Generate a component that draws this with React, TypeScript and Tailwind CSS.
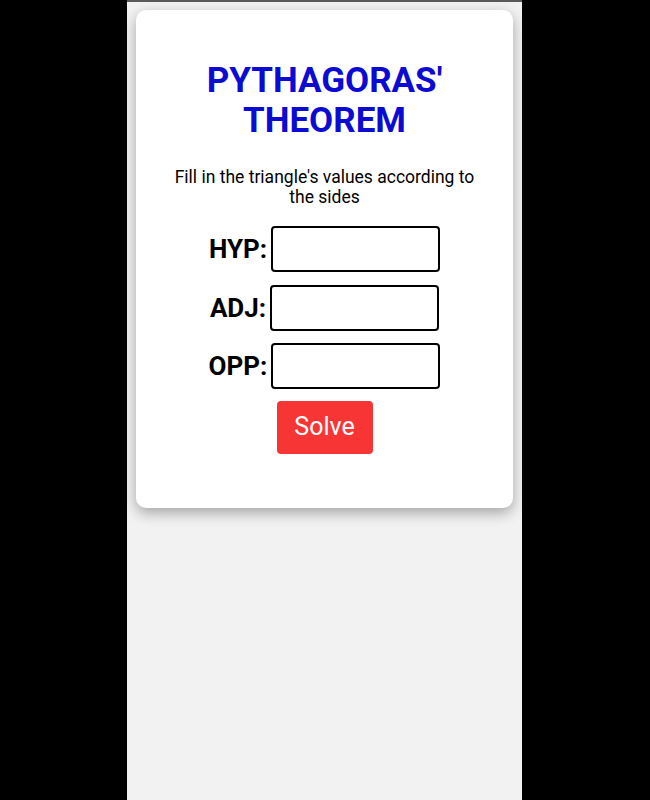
import React from "react";

export default function App() {
  const rows = ["HYP:", "ADJ:", "OPP:"];
  return (
    <div className="w-full h-[800px] bg-black flex justify-center pr-px" style={{ fontFamily: "Roboto, 'Noto Sans', sans-serif" }}>
      <div className="w-[395px] h-full bg-[#f2f2f2] flex flex-col">
        <div className="h-[2px] bg-[#5a5a5a]" />
        <div className="px-[9px] pt-[8px]">
          <div className="bg-white rounded-[10px] shadow-[0_5px_14px_rgba(0,0,0,0.32)] pt-[51px] pb-[54px] flex flex-col items-center">
            <h1 className="text-[35px] leading-[40px] font-bold text-[#0b0bd4] text-center">
              PYTHAGORAS'
              <br />
              THEOREM
            </h1>
            <p className="mt-[26px] text-[17.5px] leading-[20px] text-black text-center px-[30px]">
              Fill in the triangle's values according to the sides
            </p>
            <div className="mt-[19px] flex flex-col items-center gap-[12.5px]">
              {rows.map((r) => (
                <div key={r} className="flex items-center gap-[4px]">
                  <label className="text-[26px] font-bold text-black leading-[28px]">{r}</label>
                  <input
                    type="text"
                    className="w-[169px] h-[46px] border-2 border-black rounded-[4px] bg-white outline-none"
                  />
                </div>
              ))}
              <button className="mt-[-1px] w-[96px] h-[53px] bg-[#f83535] text-white text-[25px] rounded-[4px]">
                Solve
              </button>
            </div>
          </div>
        </div>
      </div>
    </div>
  );
}
